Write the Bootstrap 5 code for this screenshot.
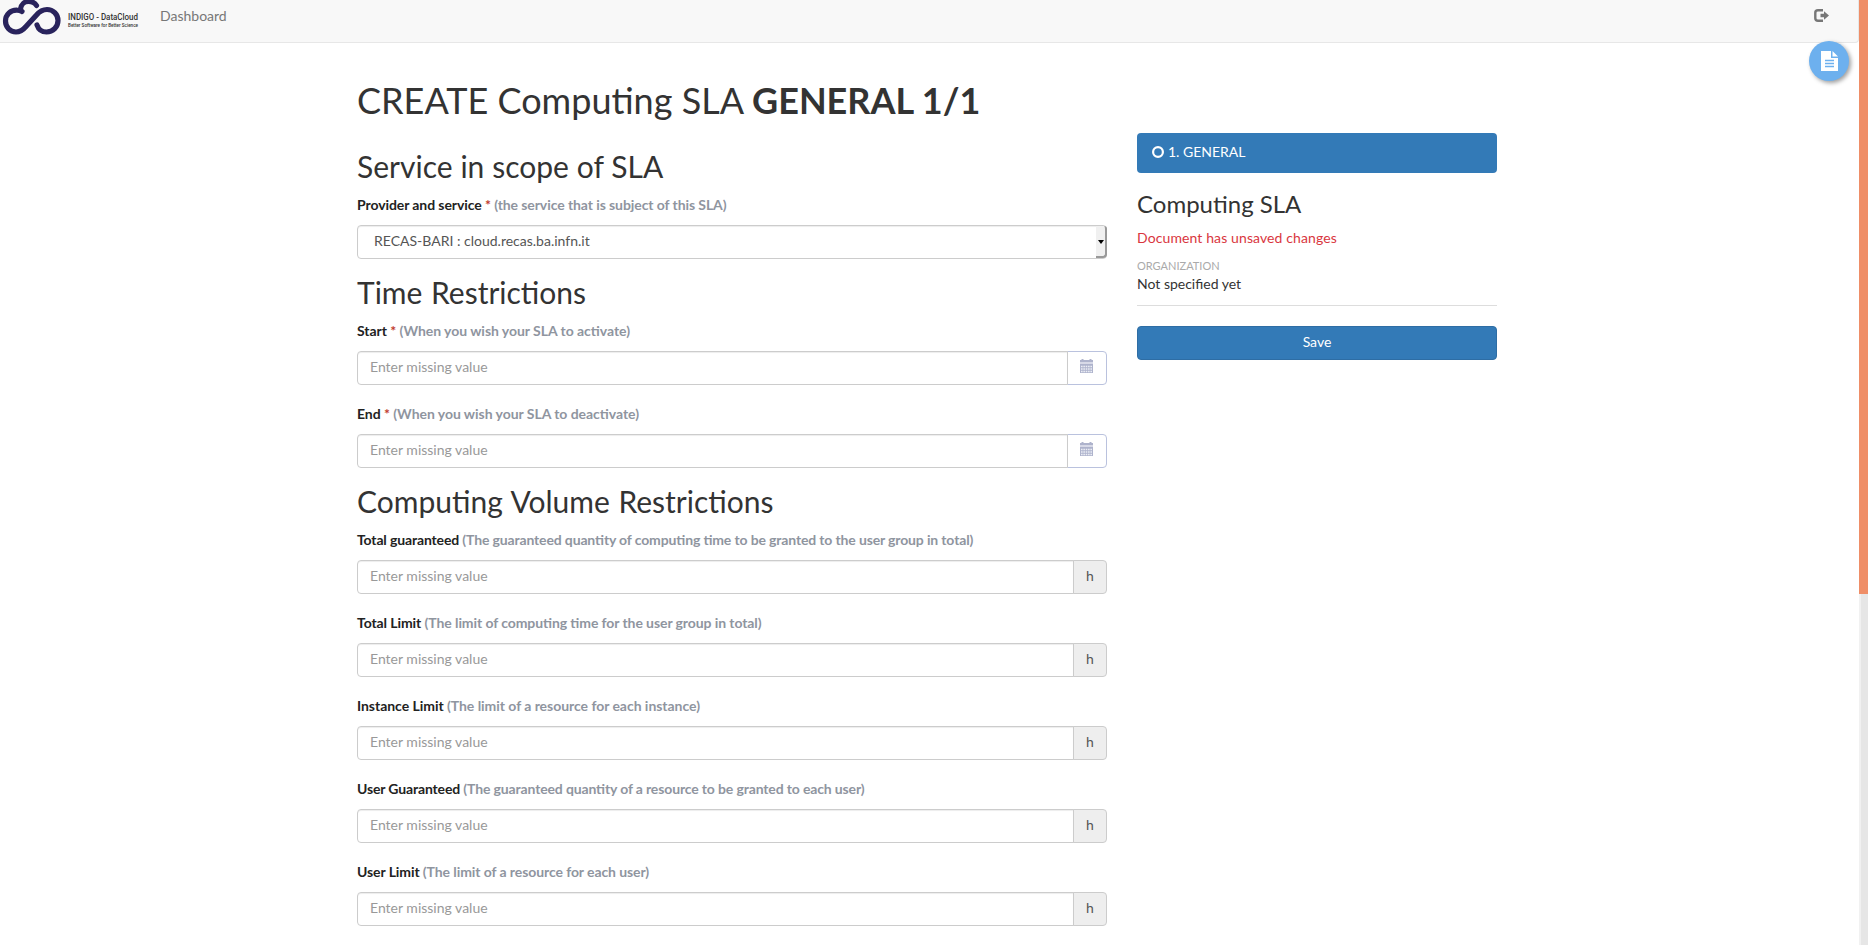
<!DOCTYPE html>
<html lang="en">
<head>
<meta charset="utf-8">
<title>Computing SLA</title>
<link href="https://cdn.jsdelivr.net/npm/bootstrap@5.3.0/dist/css/bootstrap.min.css" rel="stylesheet">
<style>
html,body{height:100%;overflow:hidden}
body{font-family:Lato,sans-serif;font-size:14px;line-height:20px;color:#333;background:#fff}
.page-area{width:1859px;height:945px;overflow:hidden}
.top-bar{height:43px;background:#f8f8f8;border-bottom:1px solid #e7e7e7;border-right:1px solid #e7e7e7;border-radius:0 0 4px 0;padding:0}
.brand-logo{display:block;width:145px;height:42px}
.top-link{color:#777;line-height:20px;margin:6px 0 0 15px;text-decoration:none}
.exit-icon{margin:9px 29px 0 0}
.main-area{width:1859px;padding-right:5px}
.main-area .container{max-width:1170px;padding:0 15px}
.main-area .row{--bs-gutter-x:30px}
h1,h2,h3{font-weight:400;line-height:1.1;margin:0}
h1{font-size:36px;padding-top:38px;height:77px}
h2{font-size:30px;height:33px;margin:17px 0 12px;word-spacing:1px}
h2.first-title{margin-top:30px;word-spacing:.2px}
h3{font-size:24px;margin:18px 0 11px}
.form-label{display:block;font-weight:700;margin:0 0 10px;color:#222;font-feature-settings:"liga" 1}
.tight-a{letter-spacing:-.04px}
.tight-b{letter-spacing:-.085px}
.tight-c{letter-spacing:-.14px}
.hint-text{color:#8f959f}
.req-star{color:#c0392b}
.field-box{margin-bottom:19px}
.field-box.last-field{margin-bottom:0}
.form-control{height:34px;font-size:14px;line-height:20px;padding:5px 12px 7px;border:1px solid #ccc;border-radius:4px;color:#555;box-shadow:inset 0 1px 1px rgba(0,0,0,.075)}
input.form-control{padding:4px 12px 8px}
.form-control::placeholder{color:#999}
select.form-control{padding-left:16px;color:#555}
.select-arrow{position:absolute;right:0;top:1px;width:11px;height:32px;background:#f0f0f0;border-right:2px solid #999;border-bottom:2px solid #999;border-radius:0 3px 4px 0;pointer-events:none}
.select-arrow::after{content:"";position:absolute;left:2px;top:14px;border:3px solid transparent;border-top:4px solid #000;border-bottom:0}
.input-group-text{font-size:14px;line-height:20px;padding:5px 12px 7px;border-color:#ccc;background:#eee;color:#555;border-radius:4px;width:34px;justify-content:center}
.date-btn{width:40px;background:#fff;border-color:#bac2de;padding:0 2px 4px 0}
.step-item{height:40px;background:#337ab7;color:#fff;padding:9px 15px;border-radius:4px;margin-top:14px}
.step-ring{margin:4px 4px 0 0}
.unsaved-text{color:#d9363e;letter-spacing:.11px}
.org-label{font-size:11px;line-height:16px;color:#aaa;margin-top:10px}
.side-rule{border-top:1px solid #ddd;margin-top:11px;margin-bottom:20px}
.save-btn{height:34px;background:#337ab7;border:1px solid #2e6da4;color:#fff;font-size:14px;line-height:20px;padding:5px 12px 7px;border-radius:4px}
.doc-fab{position:fixed;left:1809px;top:41px;width:40px;height:40px;background:#6db0ee;box-shadow:2px 2px 4px rgba(0,0,0,.38)}
.scroll-track{position:fixed;right:0;top:0;width:9px;height:945px;background:#e6e6e6;border-left:2px solid #f1f1f1}
.scroll-thumb{height:594px;background:#ef8e67;margin-left:-2px}
</style>
</head>
<body>
<svg class="d-none"><symbol id="calendar" viewBox="0 0 13 14"><path d="M0 1H1.500V0H3.500V1H9.500V0H11.500V1H13V14H0Z" fill="#aeb3cc"/><path d="M0 4H13" stroke="#e4e6f0" stroke-width="1.500"/><path d="M1 7.500H12M1 10H12M1 12.500H12" stroke="#eceef5" stroke-width="1.300" stroke-dasharray="1.600 .75"/></symbol></svg>
<div class="page-area">
<nav class="top-bar d-flex align-items-start">
<svg class="brand-logo" viewBox="0 0 145 42">
<g fill="none" stroke="#29235c" stroke-width="5.2" stroke-linecap="round">
<path d="M37 25C38.500 29.500 42 32 46.500 32C53 32 58 27 58 20.500C58 14 53 9.500 47 9.500C42.500 9.500 39.500 11.500 36.500 15L26 26.500C23 30 20 32 16 32C10 32 5.500 27 5.500 21C5.500 14.500 10.500 10 17 10.200C19.200 10.200 20.500 10.600 22 11.500"/>
<path d="M20.500 9C21 4.500 24.500 1.500 28.500 1.500C32.500 1.500 35 3 36.500 5.500"/>
</g>
<text x="68" y="20" font-family="Roboto,sans-serif" font-weight="500" font-size="8.500" fill="#333" textLength="70" lengthAdjust="spacingAndGlyphs">INDIGO - DataCloud</text>
<text x="68" y="27" font-family="Roboto,sans-serif" font-weight="500" font-size="4.800" fill="#333" textLength="70" lengthAdjust="spacingAndGlyphs">Better Software for Better Science</text>
</svg>
<a class="top-link" href="#">Dashboard</a>
<svg class="exit-icon ms-auto" width="15" height="13" viewBox="0 0 15 13"><path d="M9 1.200H4Q1.300 1.200 1.300 3.700V9.300Q1.300 11.800 4 11.800H9" fill="none" stroke="#777" stroke-width="2.400"/><path d="M6.500 4.700H10V2.300L15 6.500L10 10.700V8.300H6.500Z" fill="#777"/></svg>
</nav>
<main class="main-area">
<div class="container">
<div class="row">
<div class="col-8">
<h1>CREATE Computing SLA <strong>GENERAL 1/1</strong></h1>
<h2 class="first-title">Service in scope of SLA</h2>
<div class="field-box last-field"><label class="form-label tight-b">Provider and service <span class="req-star">*</span> <span class="hint-text">(the service that is subject of this SLA)</span></label>
<div class="position-relative"><select class="form-control"><option>RECAS-BARI : cloud.recas.ba.infn.it</option></select><span class="select-arrow"></span></div></div>
<h2>Time Restrictions</h2>
<div class="field-box"><label class="form-label tight-a">Start <span class="req-star">*</span> <span class="hint-text">(When you wish your SLA to activate)</span></label>
<div class="input-group"><input class="form-control" placeholder="Enter missing value"><span class="input-group-text date-btn"><svg width="13" height="14"><use href="#calendar"/></svg></span></div></div>
<div class="field-box last-field"><label class="form-label tight-a">End <span class="req-star">*</span> <span class="hint-text">(When you wish your SLA to deactivate)</span></label>
<div class="input-group"><input class="form-control" placeholder="Enter missing value"><span class="input-group-text date-btn"><svg width="13" height="14"><use href="#calendar"/></svg></span></div></div>
<h2>Computing Volume Restrictions</h2>
<div class="field-box"><label class="form-label tight-c">Total guaranteed <span class="hint-text">(The guaranteed quantity of computing time to be granted to the user group in total)</span></label>
<div class="input-group"><input class="form-control" placeholder="Enter missing value"><span class="input-group-text">h</span></div></div>
<div class="field-box"><label class="form-label tight-b">Total Limit <span class="hint-text">(The limit of computing time for the user group in total)</span></label>
<div class="input-group"><input class="form-control" placeholder="Enter missing value"><span class="input-group-text">h</span></div></div>
<div class="field-box"><label class="form-label tight-a">Instance Limit <span class="hint-text">(The limit of a resource for each instance)</span></label>
<div class="input-group"><input class="form-control" placeholder="Enter missing value"><span class="input-group-text">h</span></div></div>
<div class="field-box"><label class="form-label tight-c">User Guaranteed <span class="hint-text">(The guaranteed quantity of a resource to be granted to each user)</span></label>
<div class="input-group"><input class="form-control" placeholder="Enter missing value"><span class="input-group-text">h</span></div></div>
<div class="field-box"><label class="form-label tight-b">User Limit <span class="hint-text">(The limit of a resource for each user)</span></label>
<div class="input-group"><input class="form-control" placeholder="Enter missing value"><span class="input-group-text">h</span></div></div>
</div>
<aside class="col-4 pt-5"><div class="pt-4"><div class="pt-1">
<div class="step-item d-flex"><svg class="step-ring flex-shrink-0" width="12" height="12" viewBox="0 0 12 12"><circle cx="6" cy="6" r="4.900" fill="none" stroke="#fff" stroke-width="2.200"/></svg><span>1. GENERAL</span></div>
<h3>Computing SLA</h3>
<div class="unsaved-text">Document has unsaved changes</div>
<div class="org-label">ORGANIZATION</div>
<div>Not specified yet</div>
<div class="side-rule"></div>
<button class="btn save-btn w-100">Save</button>
</div></div></aside>
</div>
</div>
</main>
</div>
<button class="doc-fab border-0 rounded-circle p-0 d-flex align-items-center justify-content-center"><svg width="17" height="20" viewBox="0 0 17 20"><path d="M0 0H10V7H17V20H0Z" fill="#fff"/><path d="M11.500 0L17 5.500H11.500Z" fill="#fff"/><path d="M4 9.500H13M4 12.500H13M4 15.500H13" stroke="#6db0ee" stroke-width="1.300"/></svg></button>
<div class="scroll-track"><div class="scroll-thumb"></div></div>
<script src="https://cdn.jsdelivr.net/npm/bootstrap@5.3.0/dist/js/bootstrap.bundle.min.js"></script>
</body>
</html>
